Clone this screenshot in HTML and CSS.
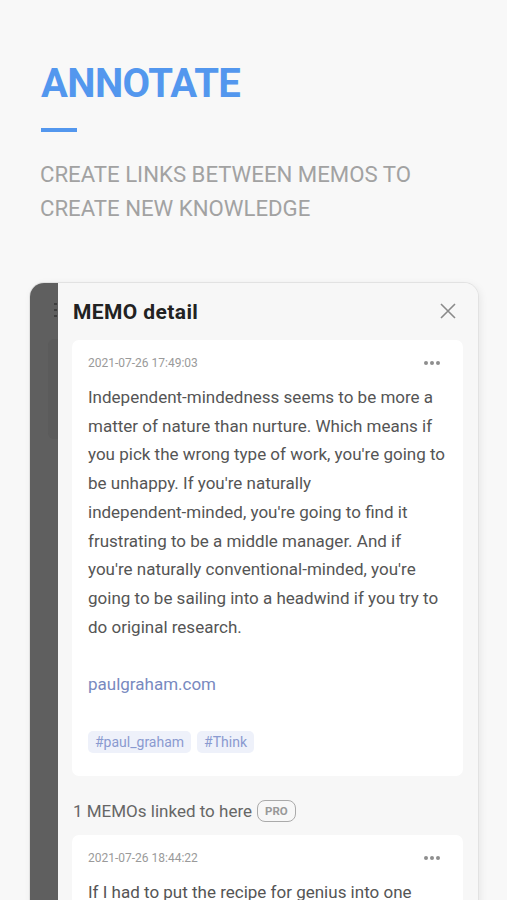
FILE: index.html
```html
<!DOCTYPE html>
<html>
<head>
<meta charset="utf-8">
<link rel="stylesheet" href="styles.css">
</head>
<body>
<header class="hero">
  <h1 class="hero-title">ANNOTATE</h1>
  <div class="hero-rule"></div>
  <p class="hero-sub">CREATE LINKS BETWEEN MEMOS TO<br>CREATE NEW KNOWLEDGE</p>
</header>
<div class="phone">
  <div class="dim">
    <div class="dim-menu"><span></span><span></span><span></span></div>
    <div class="dim-card"></div>
  </div>
  <div class="sheet">
    <div class="sheet-head">
      <h2 class="sheet-title">MEMO detail</h2>
      <svg class="close" width="18" height="18" viewBox="0 0 18 18"><path d="M2 2L16 16M16 2L2 16" stroke="#8a8a8a" stroke-width="1.6" fill="none"/></svg>
    </div>
    <div class="card">
      <div class="card-meta">
        <span class="date">2021-07-26 17:49:03</span>
        <span class="dots"><i></i><i></i><i></i></span>
      </div>
      <p class="memo">Independent-mindedness seems to be more a matter of nature than nurture. Which means if you pick the wrong type of work, you're going to be unhappy. If you're naturally independent-&#8288;minded, you're going to find it frustrating to be a middle manager. And if you're naturally conventional-&#8288;minded, you're going to be sailing into a headwind if you try to do original research.</p>
      <p class="link">paulgraham.com</p>
      <div class="tags"><span class="tag">#paul_graham</span><span class="tag">#Think</span></div>
    </div>
    <div class="linked">1 MEMOs linked to here <span class="pro">PRO</span></div>
    <div class="card">
      <div class="card-meta">
        <span class="date">2021-07-26 18:44:22</span>
        <span class="dots"><i></i><i></i><i></i></span>
      </div>
      <p class="memo">If I had to put the recipe for genius into one sentence, that might be it: to have a disinterested obsession with something that matters.</p>
    </div>
  </div>
</div>
</body>
</html>
```
FILE: styles.css
```css
html, body { margin: 0; padding: 0; }
body {
  background: #f8f8f8;
  font-family: Roboto, "Noto Sans", sans-serif;
  width: 507px;
  height: 900px;
  overflow: hidden;
}
.hero { padding: 60px 0 0 41px; }
.hero-title {
  margin: 0;
  font-size: 40px;
  line-height: 48px;
  font-weight: 700;
  color: #5397ee;
  letter-spacing: -0.6px;
}
.hero-rule {
  width: 36px;
  height: 4px;
  background: #5397ee;
  margin-top: 20px;
}
.hero-sub {
  margin: 25px 0 0 -1px;
  font-size: 22.2px;
  line-height: 34px;
  color: #a2a2a2;
  font-weight: 400;
}
.phone {
  margin: 58px 0 0 30px;
  width: 448px;
  height: 660px;
  border-radius: 14px 14px 0 0;
  overflow: hidden;
  display: flex;
  box-shadow: 0 0 0 1px #e2e2e2, 2px 2px 8px rgba(0,0,0,0.08);
}
.dim {
  width: 28px;
  background: #5f5f5f;
  position: relative;
}
.dim-menu {
  position: absolute;
  right: 1px;
  top: 20px;
  display: flex;
  flex-direction: column;
  gap: 4px;
}
.dim-menu span { width: 3px; height: 2px; background: #3e3e3e; }
.dim-card {
  position: absolute;
  right: 0;
  top: 56px;
  width: 10px;
  height: 100px;
  border-radius: 6px 0 0 6px;
  background: #5b5b5b;
}
.sheet {
  flex: 1;
  background: #f7f7f7;
  padding: 0 15px 0 14px;
}
.sheet-head {
  display: flex;
  justify-content: space-between;
  align-items: center;
  height: 57px;
  padding-top: 1px;
  box-sizing: border-box;
}
.sheet-title {
  margin: 0 0 0 1px;
  font-size: 21px;
  font-weight: 700;
  color: #222;
  letter-spacing: 0.4px;
}
.close { margin-right: 6px; margin-top: -2px; }
.card {
  background: #fff;
  border-radius: 7px;
  padding: 13px 16px 23px 16px;
  margin-bottom: 23px;
}
.card-meta {
  display: flex;
  justify-content: space-between;
  align-items: center;
  height: 20px;
}
.date { font-size: 12px; color: #9a9a9a; }
.dots { display: flex; gap: 2px; margin-right: 7px; }
.dots i { width: 4px; height: 4px; border-radius: 50%; background: #8e8e8e; }
.memo {
  margin: 10px 0 0;
  font-size: 17px;
  line-height: 28.7px;
  color: #555;
}
.link {
  margin: 29px 0 0;
  font-size: 17px;
  line-height: 28px;
  color: #7889c0;
}
.tags { display: flex; gap: 6px; margin-top: 33px; }
.tag {
  background: #eef1fa;
  color: #8a9ad0;
  font-size: 14px;
  line-height: 22px;
  padding: 0 7px;
  border-radius: 5px;
}
.linked {
  font-size: 17px;
  color: #666;
  display: flex;
  align-items: center;
  gap: 5px;
  margin: 0 0 12px 1px;
  height: 24px;
}
.pro {
  font-size: 11.5px;
  font-weight: 700;
  color: #999;
  border: 1.5px solid #aaa;
  border-radius: 8px;
  padding: 2px 7px;
  line-height: 16px;
}
```
